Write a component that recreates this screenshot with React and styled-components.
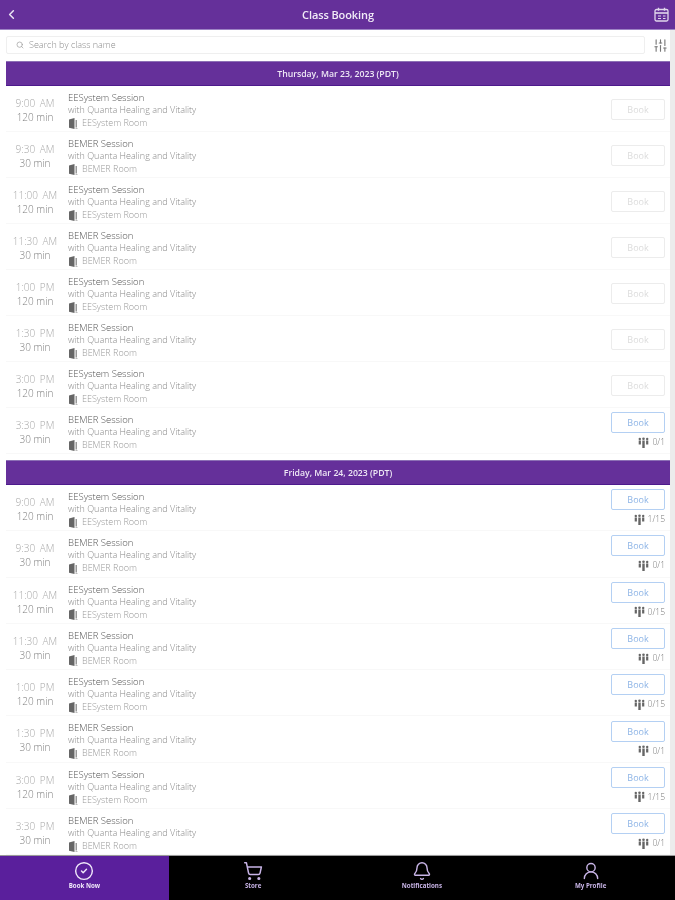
import React from "react";
import styled, { createGlobalStyle } from "styled-components";
import { ChevronLeft, Search, SlidersVertical, CircleCheck, ShoppingCart, Bell, UserRound } from "lucide-react";

const Global = createGlobalStyle`
  html, body { margin: 0; padding: 0; background: #fff; }
  * { box-sizing: border-box; }
`;
const Page = styled.div`
  width: 675px; height: 900px; display: flex; flex-direction: column; overflow: hidden;
  font-family: "Open Sans", "Liberation Sans", sans-serif; background: #fff;
  filter: blur(0.4px);
`;
const TopBar = styled.header`
  height: 30px; flex: none; background: #65309a; color: #fff; border-bottom: 1px solid #9d83c4;
  display: flex; align-items: center; justify-content: space-between; padding: 0 6px 0 4px;
`;
const Title = styled.h1`
  margin: 0 0 0 3px; font-size: 11px; font-weight: 600; color: #f1ecf7; letter-spacing: -0.1px;
`;
const Main = styled.main`
  flex: 1; min-height: 0; display: flex; overflow: hidden; border-bottom: 1px solid #9a9a9a;
`;
const Column = styled.div`
  flex: 1; min-width: 0; padding: 6px 0 0 6px; display: flex; flex-direction: column;
`;
const ScrollTrack = styled.div`
  width: 5px; flex: none; background: #ececec;
`;
const SearchRow = styled.div`
  display: flex; align-items: center; gap: 8px; height: 18px; margin-bottom: 7px;
`;
const SearchBox = styled.div`
  width: 639px; height: 18px; border: 1px solid #efefef; border-radius: 2px; flex: none;
  display: flex; align-items: center; gap: 5px; padding: 0 0 1px 9px;
  font-size: 9px; font-weight: 300; color: #8d8d8d;
`;
const DateBar = styled.div`
  height: 25px; flex: none; background: #65309a; border-top: 1px solid #8c70b5; border-bottom: 1px solid #4d1a8c;
  color: #eee8f5; font-size: 8.7px; font-weight: 600; display: flex; align-items: center; justify-content: center;
`;
const Section = styled.section`
  padding-bottom: ${p => p.$pad}px;
`;
const Row = styled.div`
  height: ${p => p.$h}px; display: grid; grid-template-columns: 58px 1fr 62px; column-gap: 4px;
  border-bottom: 1px solid #f8f8f8;
`;
const TimeCol = styled.div`
  display: flex; flex-direction: column; align-items: center; gap: 1px; padding-top: 11px;
`;
const Clock = styled.span`
  font-size: 10px; line-height: 13px; font-weight: 300; color: #a8a8a8; word-spacing: 2px; white-space: nowrap;
`;
const Duration = styled.span`
  font-size: 10px; line-height: 13px; font-weight: 300; color: #808080; white-space: nowrap;
`;
const Info = styled.div`
  display: flex; flex-direction: column; padding-top: 6px;
`;
const ClassName = styled.div`
  font-size: 9.5px; line-height: 12px; font-weight: 300; color: #555;
`;
const Teacher = styled.div`
  font-size: 9px; line-height: 12px; font-weight: 300; color: #888; white-space: nowrap;
`;
const RoomLine = styled.div`
  display: flex; align-items: center; gap: 4px; margin-top: 1px;
  font-size: 9px; line-height: 12px; font-weight: 300; color: #999;
`;
const BookCol = styled.div`
  display: flex; flex-direction: column; align-items: flex-end; justify-content: center;
  padding: ${p => (p.$seats ? "0 5px 1px 0" : "2px 5px 0 0")};
`;
const BookButton = styled.button`
  width: 54px; height: 21px; flex: none; padding: 0; background: #fff; border-radius: 2px; font-family: inherit;
  font-size: 9px; font-weight: 400;
  border: 1px solid ${p => (p.$off ? "#ececec" : "#b4d0f3")};
  color: ${p => (p.$off ? "#dcdcdc" : "#8db4e6")};
`;
const Seats = styled.div`
  display: flex; align-items: center; gap: 3px; margin-top: 3px;
  font-size: 8.5px; line-height: 12px; font-weight: 300; color: #777;
`;
const TabBar = styled.nav`
  height: 44px; flex: none; background: #000; display: grid; grid-template-columns: repeat(4, 1fr);
`;
const Tab = styled.div`
  background: ${p => (p.$on ? "#5a1f9c" : "#000")}; display: flex; flex-direction: column; align-items: center;
  padding-top: 5px; color: ${p => (p.$on ? "#f0e8fa" : "#c8b4e6")};
  font-size: 6.2px; line-height: 9px; font-weight: 700;
`;

const CalendarIcon = () => (
  <svg width="15" height="15" viewBox="0 0 15 15" fill="none" stroke="#e0d6ec" aria-hidden="true">
    <rect x="1" y="2.5" width="13" height="11.5" rx="1.5" strokeWidth="1.3" />
    <path d="M1 6h13" strokeWidth="1.6" />
    <path d="M4.5 .8v3M10.5 .8v3" strokeWidth="1.4" />
    <path d="M4 9h3M4 11.5h3M9 9h2.5M9 11.5h2.5" strokeWidth="1.2" />
  </svg>
);
const DoorIcon = () => (
  <svg width="10" height="11" viewBox="0 0 10 11" aria-hidden="true">
    <path d="M1 1.5 6.5 0v11L1 9.8z" fill="#666" />
    <path d="M7.5 2h1.5v7.5H7.5z" fill="#999" />
    <path d="M7.5 10h2v1h-2z" fill="#bbb" />
  </svg>
);
const PeopleIcon = () => (
  <svg width="11" height="11" viewBox="0 0 11 11" aria-hidden="true" fill="#666">
    <circle cx="1.8" cy="2" r="1.2" /><circle cx="5.5" cy="1.8" r="1.3" /><circle cx="9.2" cy="2" r="1.2" />
    <path d="M.7 3.6h2.2v4H.7zM4.3 3.6h2.4V11H4.3zM8.1 3.6h2.2v4H8.1z" />
  </svg>
);

const session = (time, mer, dur, name, room, seats) => ({ time, mer, dur, name, room, seats });
const slots = a => [
  session("9:00", "AM", "120 min", "EESystem Session", "EESystem Room", a[0]),
  session("9:30", "AM", "30 min", "BEMER Session", "BEMER Room", a[1]),
  session("11:00", "AM", "120 min", "EESystem Session", "EESystem Room", a[2]),
  session("11:30", "AM", "30 min", "BEMER Session", "BEMER Room", a[3]),
  session("1:00", "PM", "120 min", "EESystem Session", "EESystem Room", a[4]),
  session("1:30", "PM", "30 min", "BEMER Session", "BEMER Room", a[5]),
  session("3:00", "PM", "120 min", "EESystem Session", "EESystem Room", a[6]),
  session("3:30", "PM", "30 min", "BEMER Session", "BEMER Room", a[7]),
];
const days = [
  { label: "Thursday, Mar 23, 2023 (PDT)", h: 46, pad: 6, items: slots([null, null, null, null, null, null, null, "0/1"]) },
  { label: "Friday, Mar 24, 2023 (PDT)", h: 46.3, pad: 0, items: slots(["1/15", "0/1", "0/15", "0/1", "0/15", "0/1", "1/15", "0/1"]) },
];

export default function App() {
  return (
    <Page>
      <Global />
      <TopBar>
        <ChevronLeft size={15} color="#ece6f4" strokeWidth={2.4} />
        <Title>Class Booking</Title>
        <CalendarIcon />
      </TopBar>
      <Main>
        <Column>
          <SearchRow>
            <SearchBox>
              <Search size={8} color="#999" />
              Search by class name
            </SearchBox>
            <SlidersVertical size={15} color="#777" strokeWidth={1.8} />
          </SearchRow>
          {days.map(d => (
            <Section key={d.label} $pad={d.pad}>
              <DateBar>{d.label}</DateBar>
              {d.items.map(s => (
                <Row key={s.time} $h={d.h}>
                  <TimeCol>
                    <Clock>{s.time} {s.mer}</Clock>
                    <Duration>{s.dur}</Duration>
                  </TimeCol>
                  <Info>
                    <ClassName>{s.name}</ClassName>
                    <Teacher>with Quanta Healing and Vitality</Teacher>
                    <RoomLine><DoorIcon />{s.room}</RoomLine>
                  </Info>
                  <BookCol $seats={!!s.seats}>
                    <BookButton $off={!s.seats}>Book</BookButton>
                    {s.seats && <Seats><PeopleIcon />{s.seats}</Seats>}
                  </BookCol>
                </Row>
              ))}
            </Section>
          ))}
        </Column>
        <ScrollTrack />
      </Main>
      <TabBar>
        <Tab $on><CircleCheck size={20} strokeWidth={1.7} />Book Now</Tab>
        <Tab><ShoppingCart size={20} strokeWidth={1.8} />Store</Tab>
        <Tab><Bell size={20} strokeWidth={1.7} />Notifications</Tab>
        <Tab><UserRound size={20} strokeWidth={1.7} />My Profile</Tab>
      </TabBar>
    </Page>
  );
}
